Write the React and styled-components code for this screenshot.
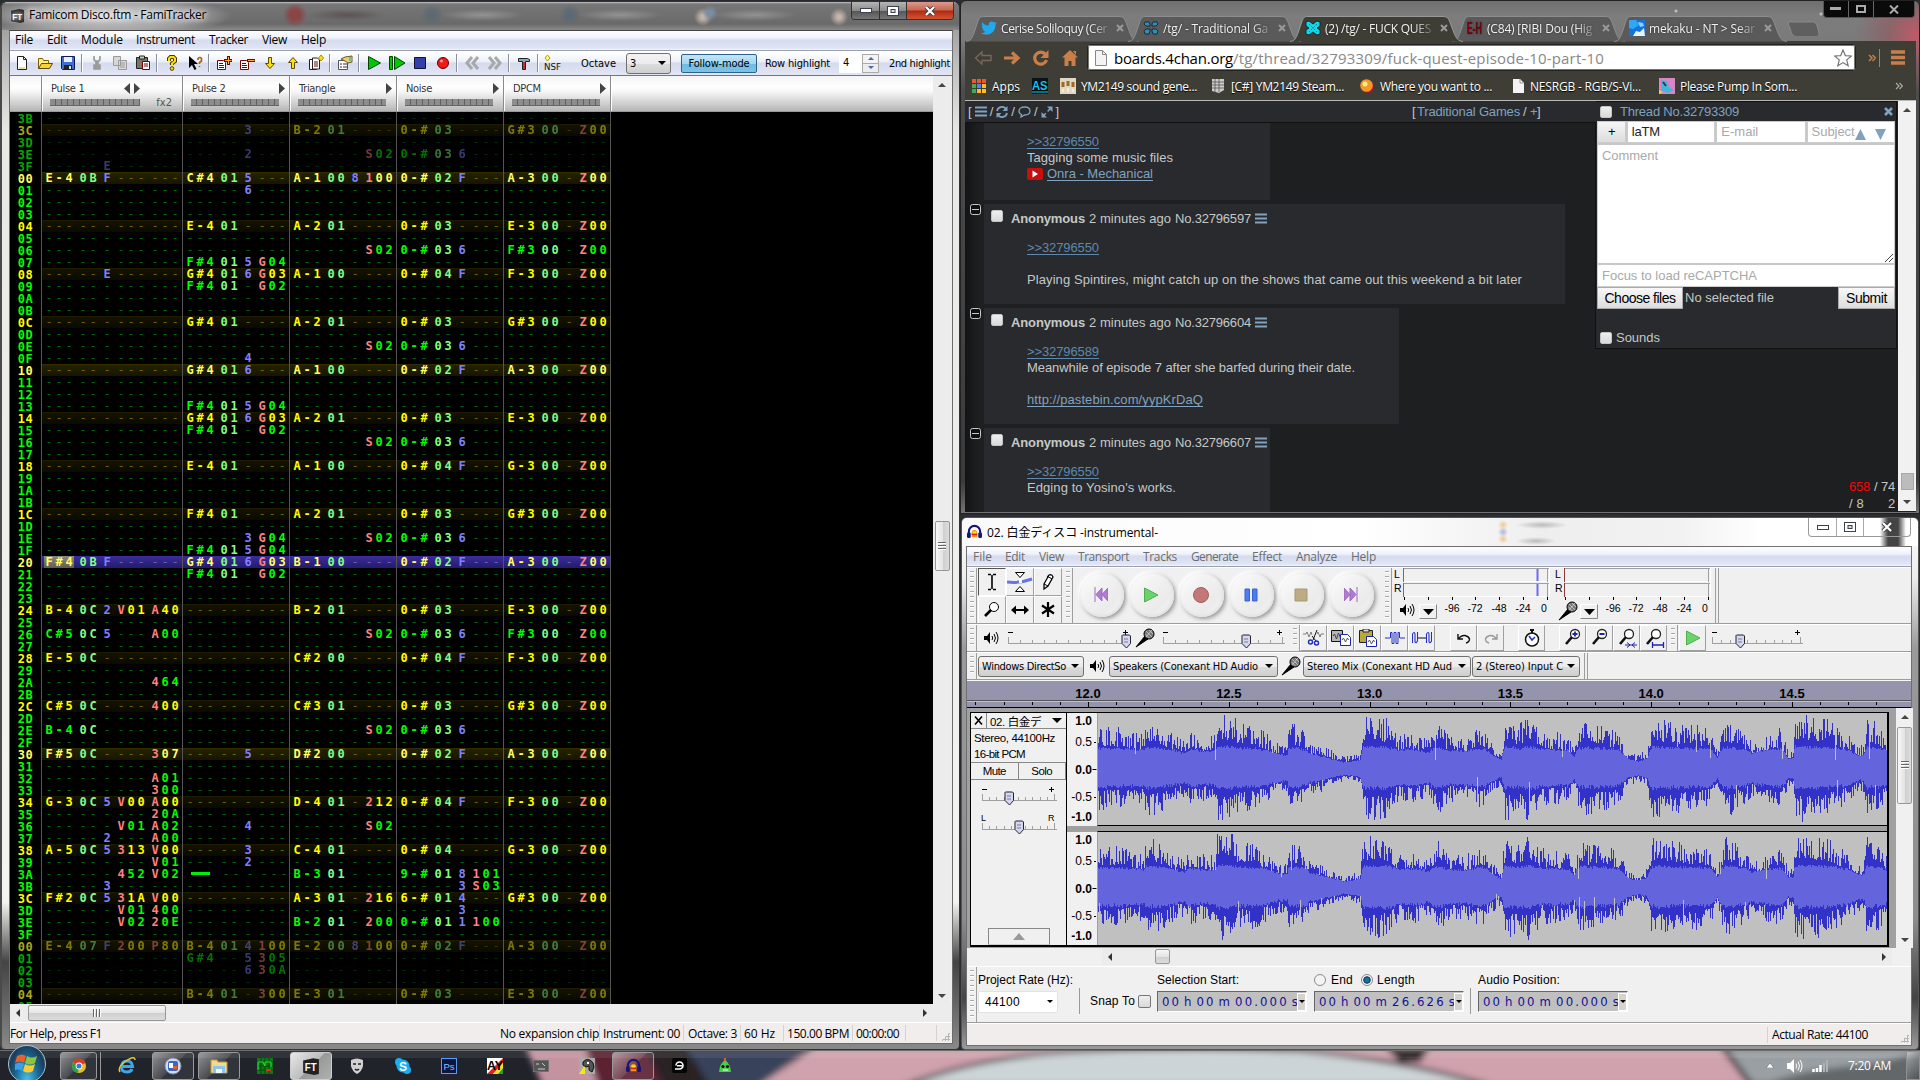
import React, { useLayoutEffect, useRef, useState } from "react";
import styled, { createGlobalStyle, css } from "styled-components";

const ui = `"Open Sans", "Noto Sans", "Noto Sans CJK JP", sans-serif`;
const arial = `"Liberation Sans", "Noto Sans CJK JP", sans-serif`;
const tahoma = `"DejaVu Sans Condensed", "DejaVu Sans", sans-serif`;

const Global = createGlobalStyle`
  *, *::before, *::after { box-sizing: border-box; }
  html, body { margin: 0; padding: 0; background: #26282e; }
  body { width: 1920px; height: 1080px; overflow: hidden; font-family: ${ui}; font-size: 12px; color: #000; }
  svg { display: block; flex: none; }
`;

/* ---------- shared pieces ---------- */

const TrackedText = styled.span`
  display: block;
  flex: none;
  white-space: pre;
  overflow: visible;
  width: ${p => p.$w}px;
  margin-left: ${p => p.$ml || 0}px;
  ${p => p.$size && css`font-size: ${p.$size}px;`}
  ${p => p.$color && css`color: ${p.$color};`}
  ${p => p.$weight && css`font-weight: ${p.$weight};`}
  ${p => p.$font && css`font-family: ${p.$font};`}
  ${p => p.$line && css`border-bottom: 1px solid; line-height: 13px; height: 14px;`}
`;

/* Label whose letter spacing is worked out so that it fills the width w. */
function Label({ w, ml, size, color, weight, font, line, children }) {
  const ref = useRef(null);
  const [spacing, setSpacing] = useState(0);
  useLayoutEffect(() => {
    const natural = ref.current.getBoundingClientRect().width;
    setSpacing((w - natural) / String(children).length);
  }, [w, children]);
  return (
    <TrackedText $w={w} $ml={ml} $size={size} $color={color} $weight={weight} $font={font} $line={line}>
      <span ref={ref} style={{ letterSpacing: spacing }}>{children}</span>
    </TrackedText>
  );
}

const Desktop = styled.main`
  position: relative;
  width: 1920px;
  height: 1080px;
  overflow: hidden;
  background: #2a2c31;
`;

const Window = styled.section`
  position: absolute;
  left: ${p => p.$x}px;
  top: ${p => p.$y}px;
  width: ${p => p.$w}px;
  height: ${p => p.$h}px;
  display: flex;
  flex-direction: column;
  overflow: hidden;
`;

const ScrollTrack = styled.div`
  display: flex;
  flex: none;
  flex-direction: ${p => (p.$horizontal ? "row" : "column")};
  align-items: center;
  background: ${p => p.$bg || "#ececec"};
  ${p => (p.$horizontal ? css`height: ${p.$size}px;` : css`width: ${p.$size}px;`)}
`;
const ScrollArrow = styled.i`
  flex: none;
  width: 0;
  height: 0;
  border: 4px solid transparent;
  ${p => p.$dir === "up" && css`border-bottom-color: #444; border-top: 0; margin: ${p.$m};`}
  ${p => p.$dir === "down" && css`border-top-color: #444; border-bottom: 0; margin: ${p.$m};`}
  ${p => p.$dir === "left" && css`border-right-color: #333; border-left: 0; margin: ${p.$m};`}
  ${p => p.$dir === "right" && css`border-left-color: #333; border-right: 0; margin: ${p.$m};`}
`;
const ScrollThumb = styled.div`
  display: flex;
  flex: none;
  align-items: center;
  justify-content: center;
  width: ${p => p.$w}px;
  height: ${p => p.$h}px;
  margin: ${p => p.$m || 0};
  border: 1px solid #979797;
  border-radius: 2px;
  background: linear-gradient(${p => (p.$vertical ? "90deg" : "180deg")}, #f7f7f7, #e4e4e4 50%, #cfcfd1 52%, #dcdcdc);
`;
const Ridges = styled.i`
  width: ${p => (p.$vertical ? 8 : 9)}px;
  height: ${p => (p.$vertical ? 9 : 8)}px;
  background: repeating-linear-gradient(${p => (p.$vertical ? "180deg" : "90deg")}, #666 0 1px, #fff 1px 2px, transparent 2px 3px);
`;
const Spacer = styled.div`flex: 1;`;

/* ---------- FamiTracker ---------- */

const FtWindow = styled(Window)`
  background: linear-gradient(180deg, #8a8a8a 0, #bdbdbd 60px, #e8e8e4 130px, #f4f4f0 900px, #444 960px, #8c8c8c 1050px);
  border: 1px solid #333;
  border-left: 2px solid #4a4a4a;
  border-radius: 7px 7px 5px 5px;
`;
const FtTitle = styled.header`
  display: flex;
  flex: none;
  height: 28px;
  background:
    radial-gradient(ellipse 125px 20px at 105px 14px, rgba(220,220,220,.95), rgba(190,190,190,.6) 70%, transparent),
    radial-gradient(circle at 293px 13px, #8a4545 5px, transparent 12px),
    radial-gradient(ellipse 40px 6px at 345px 13px, rgba(85,70,70,.7), transparent),
    radial-gradient(circle at 430px 13px, #5a6973 3px, transparent 11px),
    radial-gradient(ellipse 42px 6px at 480px 13px, rgba(155,155,155,.8), transparent),
    radial-gradient(circle at 568px 13px, #5a6973 3px, transparent 11px),
    radial-gradient(ellipse 42px 6px at 618px 13px, rgba(155,155,155,.8), transparent),
    radial-gradient(circle at 708px 11px, #7a8fa6 2px, transparent 8px),
    radial-gradient(circle at 701px 15px, #c4b5aa 2px, transparent 9px),
    radial-gradient(ellipse 42px 6px at 752px 13px, rgba(155,155,155,.8), transparent),
    radial-gradient(circle at 837px 15px, #c4b5aa 2px, transparent 9px),
    linear-gradient(180deg, #c5c5c5 0, #777 2px, #6a6a6a 22px, #8a8a8a 28px);
`;
const TitleText = styled.div`
  padding: ${p => p.$pad};
  text-shadow: 0 0 5px #fff, 0 0 8px #fff;
  line-height: 17px;
`;
const Caption = styled.div`
  display: flex;
  flex: none;
  width: ${p => p.$w}px;
  height: ${p => p.$h}px;
  margin: ${p => p.$m || "0"};
  border: 1px solid ${p => p.$edge || "#333"};
  border-top: 0;
  border-radius: 0 0 4px 4px;
  overflow: hidden;
`;
const CaptionButton = styled.div`
  display: flex;
  align-items: center;
  justify-content: center;
  width: ${p => p.$w}px;
  border-left: ${p => (p.$first ? 0 : 1)}px solid ${p => p.$edge || "#333"};
  background: ${p => p.$bg};
`;
const FtClient = styled.div`
  display: flex;
  flex-direction: column;
  width: 944px;
  height: 1014px;
  margin-left: 7px;
  border: 1px solid #6c6c6c;
  border-top-color: #444;
  background: #f0f0f0;
`;
const MenuBar = styled.nav`
  display: flex;
  flex: none;
  align-items: center;
  height: ${p => p.$h}px;
  padding-bottom: ${p => p.$lift || 0}px;
  background: linear-gradient(180deg, #fdfdff 0, #f0f3fa 35%, #d6dcef 50%, #dfe5f5 90%, #f4f6fb);
  border-bottom: 1px solid #9aa0ad;
`;
const FtToolbar = styled.div`
  display: flex;
  flex: none;
  align-items: center;
  height: 25px;
  padding-bottom: 1px;
  border-top: 1px solid #fff;
  border-bottom: 1px solid #777;
  background: linear-gradient(180deg, #fff, #eef1f9 40%, #d5dbee 50%, #e2e6f4);
`;
const ToolIcon = styled.div`
  display: flex;
  flex: none;
  justify-content: center;
  width: 23px;
`;
const ToolSep = styled.div`
  flex: none;
  width: 6px;
  height: 18px;
  background: linear-gradient(90deg, transparent 2px, #8b8f99 2px 3px, #fff 3px 4px, transparent 4px);
`;
const Select = styled.div`
  display: flex;
  flex: none;
  align-items: center;
  width: ${p => p.$w}px;
  height: ${p => p.$h || 21}px;
  margin-left: ${p => p.$ml || 0}px;
  padding-left: 3px;
  border: 1px solid #707070;
  border-radius: 3px;
  background: linear-gradient(180deg, #f3f3f3, #ebebeb 50%, #dcdcdc 52%, #cfcfcf);
`;
const SelectText = styled.div`
  flex: 1;
  min-width: 0;
  overflow: hidden;
  white-space: nowrap;
  font-family: ${tahoma};
  font-size: 11px;
`;
const Caret = styled.i`
  flex: none;
  width: 0;
  height: 0;
  margin: 0 ${p => p.$mr ?? 4}px;
  border: ${p => p.$s || 4}px solid transparent;
  border-top-color: #000;
  border-bottom: 0;
`;
const FollowButton = styled.div`
  display: flex;
  flex: none;
  align-items: center;
  justify-content: center;
  width: 76px;
  height: 19px;
  margin-left: 10px;
  border: 1px solid #2c628b;
  border-radius: 2px;
  background: linear-gradient(180deg, #c5e5f6, #a0d6f0 50%, #6fbbe0 52%, #7cc4e6);
`;
const NumberField = styled.div`
  display: flex;
  flex: none;
  width: 40px;
  height: 19px;
  margin-left: 9px;
  background: #fff;
  span { flex: 1; padding-left: 4px; font: 11px/18px ${tahoma}; }
`;
const Spinner = styled.div`
  display: flex;
  flex-direction: column;
  align-items: center;
  justify-content: space-around;
  width: 17px;
  border: 1px solid #aaa;
  background: linear-gradient(180deg, #f3f3f3 45%, #aaa 45% 52%, #ededed 52%);
  i { border: 3px solid transparent; border-bottom: 3px solid #4c68a8; border-top: 0; }
  i + i { border-top: 3px solid #4c68a8; border-bottom: 0; }
`;
const TrackerBody = styled.div`
  display: flex;
  height: 928px;
`;
const TrackerMain = styled.div`
  display: flex;
  flex-direction: column;
  width: 923px;
  background: #000;
  overflow: hidden;
`;
const ChannelHeads = styled.div`
  display: flex;
  flex: none;
  height: 36px;
  background: linear-gradient(180deg, #f4f4f4 0, #fff 30%, #f6f6f6 45%, #b6b6b6);
  border-bottom: 1px solid #999;
`;
const ChannelHead = styled.div`
  flex: none;
  width: ${p => p.$w}px;
  padding: 4px 4px 0 8px;
  border-left: 1px solid #8a8a8a;
  box-shadow: inset 1px 0 #fff;
`;
const HeadGutter = styled.div`width: 31px;`;
const HeadLine = styled.div`
  display: flex;
  align-items: center;
  height: 16px;
  color: #333;
  font: 11px ${tahoma};
  letter-spacing: -0.3px;
  span { flex: 1; padding-left: 1px; }
  svg { margin-left: 4px; }
`;
const MeterLine = styled.div`
  display: flex;
  align-items: center;
  justify-content: space-between;
  height: 12px;
  padding-right: 6px;
  color: #555;
  font: 11px ${tahoma};
`;
const Meter = styled.i`
  width: 90px;
  height: 7px;
  background: repeating-linear-gradient(90deg, #8d8d8d 0 5px, #5f5f5f 5px 6px);
  border-bottom: 1px solid #666;
`;
const PatternRow = styled.div`
  display: flex;
  flex: none;
  height: 12px;
  font: bold 12px/12px "DejaVu Sans Mono", monospace;
`;
const RowNumber = styled.div`
  width: 31px;
  height: 12px;
  padding-top: 1px;
  text-align: center;
  letter-spacing: 0.5px;
  color: ${p => p.$color};
`;
const rowBackground = {
  plain: "transparent",
  beat: "linear-gradient(180deg, #1c1a00 0 1px, #141200 1px, #0b0a00)",
  bar: "linear-gradient(180deg, #302e00 0 1px, #242200 1px, #171500)",
  cursor: "linear-gradient(180deg, #3b2d9c 0, #2f2484 50%, #241b6c)",
};
const Cell = styled.div`
  display: flex;
  flex: none;
  gap: 4px;
  width: ${p => p.$w}px;
  padding-left: 2px;
  border-left: 1px solid #555;
  background: ${p => rowBackground[p.$kind]};
`;
const Field = styled.div`
  display: flex;
  opacity: ${p => (p.$dim ? 0.45 : 1)};
  background: ${p => (p.$selected ? "linear-gradient(180deg, #8d8a7c, #5f5c55)" : "none")};
`;
const Glyph = styled.span`
  width: 10px;
  height: 12px;
  text-align: center;
  color: ${p => p.$c};
  font-weight: ${p => (p.$empty ? 400 : 700)};
`;
const HaltMark = styled.i`
  width: 19px;
  height: 3px;
  margin: 4px 7px 0 6px;
  background: #00f000;
`;
const PatternEdge = styled.div`
  width: 1px;
  background: #555;
`;
const StatusBar = styled.footer`
  display: flex;
  flex: none;
  align-items: center;
  height: ${p => p.$h}px;
  border-top: 1px solid #fff;
  background: #f1edec;
`;
const StatusPane = styled.div`
  display: flex;
  flex: none;
  align-items: center;
  width: ${p => p.$w}px;
  height: 16px;
  padding-left: 3px;
  border-left: 1px solid #d5d2d1;
`;
const GripDots = styled.i`
  width: 9px;
  height: 9px;
  margin: 7px 2px 0 auto;
  background: radial-gradient(circle, #b5b1b0 1px, transparent 1.2px) 0 0 / 3px 3px;
  clip-path: polygon(100% 0, 100% 100%, 0 100%);
`;

const PREV = {
  "3C": [, ".....3", "B-201", "0-#03", "G#300.Z00"],
  "3E": [, ".....2", "......S02", "0-#036"],
  "3F": [".....E"],
};
const CURRENT = {
  "00": ["E-40BF", "C#4015", "A-1008100", "0-#02F", "A-300.Z00"],
  "01": [, ".....6"],
  "04": [, "E-401", "A-201", "0-#03", "E-300.Z00"],
  "06": [, , "......S02", "0-#036", "F#300.Z00"],
  "07": [, "F#4015G04"],
  "08": [".....E", "G#4016G03", "A-100", "0-#04F", "F-300.Z00"],
  "09": [, "F#401.G02"],
  "0C": [, "G#401", "A-201", "0-#03", "G#300.Z00"],
  "0E": [, , "......S02", "0-#036"],
  "0F": [, ".....4"],
  "10": [, "G#4016", "A-100", "0-#02F", "A-300.Z00"],
  "13": [, "F#4015G04"],
  "14": [, "G#4016G03", "A-201", "0-#03", "E-300.Z00"],
  "15": [, "F#401.G02"],
  "16": [, , "......S02", "0-#036"],
  "18": [, "E-401", "A-100", "0-#04F", "G-300.Z00"],
  "1C": [, "F#401", "A-201", "0-#03", "G#300.Z00"],
  "1E": [, ".....3G04", "......S02", "0-#036"],
  "1F": [, "F#4015G04"],
  "20": ["F#40BF", "G#4016G03", "B-100", "0-#02F", "A-300.Z00"],
  "21": [, "F#401.G02"],
  "24": ["B-40C2V01A40", , "B-201", "0-#03", "E-300.Z00"],
  "26": ["C#50C5...A00", , "......S02", "0-#036", "F#300.Z00"],
  "28": ["E-50C", , "C#200", "0-#04F", "F-300.Z00"],
  "2A": [".........464"],
  "2C": ["C#50C....400", , "C#301", "0-#03", "G#300.Z00"],
  "2E": ["B-40C", , "......S02", "0-#036"],
  "30": ["F#50C....307", ".....5", "D#200", "0-#02F", "A-300.Z00"],
  "32": [".........A01"],
  "33": [".........300"],
  "34": ["G-30C5V00A00", , "D-401.212", "0-#04F", "F-300.Z00"],
  "35": [".........20A"],
  "36": ["......V01A02", ".....4", "......S02"],
  "37": [".....2...A00"],
  "38": ["A-50C5313V00", ".....3", "C-401", "0-#04", "G-300.Z00"],
  "39": [".........V01", ".....2"],
  "3A": ["......452V02", "===", "B-301", "9-#018101"],
  "3B": [".....3", , , ".....3S03"],
  "3C": ["F#20C531AV00", , "A-301.216", "6-#014", "G#300.Z00"],
  "3D": ["......V01400", , , ".....3"],
  "3E": ["......V0220E", , "B-201.200", "0-#011100"],
};
const NEXT = {
  "00": ["E-407F200P80", "B-4014100", "E-2008100", "0-#02F", "A-300.Z00"],
  "01": [, "G#4..5305"],
  "02": [, ".....630A"],
  "04": [, "B-401.300", "E-301", "0-#03", "E-300.Z00"],
};
const hex = n => n.toString(16).toUpperCase().padStart(2, "0");
const frame = (data, from, to, dim) => {
  const out = [];
  for (let i = from; i <= to; i++) out.push({ i, id: hex(i), cells: data[hex(i)] || [], dim });
  return out;
};
const ROWS = [...frame(PREV, 0x3b, 0x3f, true), ...frame(CURRENT, 0, 0x3f, false), ...frame(NEXT, 0, 5, true)];
const CHANNELS = [
  { name: "Pulse 1", w: 141, len: 12 },
  { name: "Pulse 2", w: 107, len: 9 },
  { name: "Triangle", w: 107, len: 9 },
  { name: "Noise", w: 107, len: 9 },
  { name: "DPCM", w: 107, len: 9 },
];
const FIELDS = [[0, 3], [3, 5], [5, 6], [6, 9], [9, 12]];

function PatternCell({ text = "", channel, kind, dim, selected }) {
  const full = text.padEnd(channel.len, ".");
  const base = kind === "plain" ? "#00ff00" : kind === "beat" ? "#ffff00" : "#ffff60";
  const empty = kind === "plain" ? "#006414" : kind === "cursor" ? "#6a62ac" : "#68650c";
  return (
    <Cell $w={channel.w} $kind={kind}>
      {FIELDS.filter(f => f[1] <= channel.len).map(([a, b], fi) => {
        if (fi === 0 && full.startsWith("===")) return <HaltMark key={fi} />;
        const part = full.slice(a, b);
        return (
          <Field key={fi} $dim={dim} $selected={selected && fi === 0}>
            {[...part].map((ch, k) => {
              const isEmpty = ch === ".";
              let c = base;
              if (fi === 1) c = "#80ff80";
              if (fi === 2) c = "#8080ff";
              if (fi >= 3 && k === 0) c = "#ff8080";
              return <Glyph key={k} $c={isEmpty ? empty : c} $empty={isEmpty}>{isEmpty ? "-" : ch}</Glyph>;
            })}
          </Field>
        );
      })}
    </Cell>
  );
}

const I = ({ children, w = 16, h = 16, vb }) => (
  <svg width={w} height={h} viewBox={vb || `0 0 ${w} ${h}`} fill="none">{children}</svg>
);
const Sheet = ({ x = 0, c = "#800000" }) => (
  <g transform={`translate(${x} 0)`}>
    <path d="M1.500 5.500h6l2 2v7h-8z" fill="#fff" stroke={c} />
    <path d="M3 8.500h4M3 10.500h5M3 12.500h5" stroke={c} />
  </g>
);
const ftTools = [
  <I><path d="M3.500 1.500h6l3 3v10h-9z" fill="#fff" stroke="#222" /><path d="M9.500 1.500v3h3" stroke="#222" /><path d="M5 13h6" stroke="#e8dfa0" strokeWidth="2" /></I>,
  <I><path d="M1.500 13.500v-10h4l1 2h5v3" fill="#ffef80" stroke="#806000" /><path d="M1.500 13.500l3-5h11l-3 5z" fill="#f5d43a" stroke="#604800" /></I>,
  <I><path d="M1.500 1.500h13v13h-12l-1-1z" fill="#3b6fd0" stroke="#101c50" /><path d="M4 2h8v5H4z" fill="#e8f0ff" /><path d="M4 10h8v4H4z" fill="#222" /><path d="M9 11h2v3H9z" fill="#ddd" /></I>,
  null,
  <I><path d="M5 1v4l2 2M11 1v4L9 7M7 6h2v3H7zM5 10h6v4H5z" fill="#9a9a9a" stroke="#9a9a9a" strokeWidth="1.600" /></I>,
  <I><path d="M1.500 1.500h7v9h-7zM6.500 5.500h8v9h-8z" fill="#d8d8d8" stroke="#9a9a9a" /><path d="M8 8h5M8 10h5M8 12h5" stroke="#9a9a9a" /></I>,
  <I><path d="M1.500 2.500h11v11h-11z" fill="#77756a" stroke="#222" /><path d="M4.500 1h5v3h-5z" fill="#ccc" stroke="#222" /><path d="M7.500 6.500h7v8h-7z" fill="#fff" stroke="#700" /><path d="M9 9h4M9 11h4" stroke="#700" /></I>,
  null,
  <I><path d="M5 6V3.500L6.500 2h3L11 3.500V6L8 8.500V10" stroke="#4a3a00" strokeWidth="4" /><path d="M5 6V3.500L6.500 2h3L11 3.500V6L8 8.500V10" stroke="#ffe000" strokeWidth="2" /><circle cx="8" cy="13.500" r="1.800" fill="#ffe000" stroke="#4a3a00" /></I>,
  <I><path d="M2 1v12l3-3 2.500 5 2-1L7 9h4z" fill="#000" /><path d="M11 5V3.500q2-2 3.500 0V6l-2 1.500V9M12.500 11v1" stroke="#b06000" strokeWidth="1.600" /></I>,
  null,
  <I><Sheet /><path d="M12.500 1v9M8 5.500h8" stroke="#700" strokeWidth="3" /><path d="M12.500 2v7M9 5.500h6.500" stroke="#ffb040" /></I>,
  <I><Sheet /><path d="M8 5.500h8" stroke="#700" strokeWidth="3" /><path d="M9 5.500h6.500" stroke="#ffb040" /></I>,
  <I><path d="M6.500 2.500h3v6h3L8 13.500 3.500 8.500h3z" fill="#ffe000" stroke="#5a4a00" /></I>,
  <I><path d="M6.500 13.500h3v-6h3L8 2.500 3.500 7.500h3z" fill="#ffe000" stroke="#5a4a00" /></I>,
  <I><path d="M1.500 4.500h7v10h-7z" fill="#fff" stroke="#222" /><path d="M4.500 3h5l2 2v9h-7z" fill="#fff" stroke="#222" /><path d="M6 7h4M6 9h4M6 11h4" stroke="#700" /><path d="M13 0l2.500 3L13 6l-2.500-3z" fill="#ffe000" stroke="#b09000" /></I>,
  null,
  <I><path d="M1.500 5.500h9v9h-9z" fill="#fff" stroke="#555" /><path d="M3 9h2M6 9h4M3 12h2M6 12h4" stroke="#333" /><path d="M4 4l4-2 7-1v6l-4 1-3-2z" fill="#e8cf70" stroke="#6a5a20" /><path d="M12 2h3v4h-3z" fill="#77b8a0" /></I>,
  null,
  <I><path d="M2.500 1.500L14.500 8 2.500 14.500z" fill="#00c800" stroke="#064006" /></I>,
  <I w={18}><path d="M1.500 1.500h3v13h-3z" fill="#00c800" stroke="#064006" /><path d="M6.500 1.500L17 8 6.500 14.500z" fill="#00c800" stroke="#064006" /></I>,
  <I><path d="M2.500 2.500h11v11h-11z" fill="#3340a8" stroke="#101430" /></I>,
  <I><circle cx="8" cy="8" r="5.500" fill="#f01818" stroke="#600" /><circle cx="6.500" cy="6" r="1.500" fill="#ff9a9a" /></I>,
  null,
  <I><path d="M8 2L3 8l5 6M14 2L9 8l5 6" stroke="#a8a8a8" strokeWidth="3" /></I>,
  <I><path d="M2 2l5 6-5 6M8 2l5 6-5 6" stroke="#a8a8a8" strokeWidth="3" /></I>,
  null,
  <I><path d="M2.500 3.500h9l2 1v2h-4v8h-3v-8h-4z" fill="#8ab" stroke="#222" /><path d="M7 7h2v7H7z" fill="#c03030" /></I>,
  null,
  <I w={20}><text x="1" y="15" fontSize="9.500" fontFamily="DejaVu Sans" textLength="17" lengthAdjust="spacingAndGlyphs" fill="#111">NSF</text><path d="M4.500 0l2.500 3-2.500 3L2 3z" fill="#ffff70" stroke="#b0a000" /></I>,
];

const Glyphs = {
  min: <I w={12} h={5}><rect x=".5" y=".5" width="11" height="4" fill="#fff" stroke="#3b4150" /></I>,
  max: <I w={12} h={10}><rect x=".5" y=".5" width="11" height="9" fill="#fff" stroke="#3b4150" /><rect x="4" y="3.500" width="4" height="3" fill="#ddd" stroke="#3b4150" /></I>,
  close: <I w={12} h={10}><path d="M2 1l8 8M10 1L2 9" stroke="#3b3b48" strokeWidth="4" /><path d="M2 1l8 8M10 1L2 9" stroke="#fff" strokeWidth="2.200" /></I>,
};

function FtIcon({ s = 16 }) {
  return (
    <svg width={s} height={s} viewBox="0 0 16 16">
      <path d="M1 3l9-2 5 1v13l-4 1-10-2z" fill="#222" />
      <text x="2.500" y="12.500" fontSize="10" fontWeight="700" fontFamily="Liberation Sans" textLength="10.500" lengthAdjust="spacingAndGlyphs" fill="#fff">FT</text>
    </svg>
  );
}

function FamiTracker() {
  return (
    <FtWindow $x={0} $y={1} $w={960} $h={1049}>
      <FtTitle>
        <TitleText $pad="6px 0 0 8px"><FtIcon s={15} /></TitleText>
        <TitleText $pad="4px 0 0 4px"><Label w={177}>Famicom Disco.ftm - FamiTracker</Label></TitleText>
        <Spacer />
        <Caption $w={103} $h={18} $m="0 5px 0 0">
          <CaptionButton $first $w={28} $bg="linear-gradient(#b5b5b5, #8c8c8c 50%, #555 52%, #777)">{Glyphs.min}</CaptionButton>
          <CaptionButton $w={27} $bg="linear-gradient(#b5b5b5, #8c8c8c 50%, #555 52%, #777)">{Glyphs.max}</CaptionButton>
          <CaptionButton $w={48} $bg="linear-gradient(#d99a8c, #c9654f 48%, #b02a12 52%, #d2542f)">{Glyphs.close}</CaptionButton>
        </Caption>
      </FtTitle>
      <FtClient>
        <MenuBar $h={20} $lift={2}>
          <Label ml={5} w={18}>File</Label>
          <Label ml={14} w={20}>Edit</Label>
          <Label ml={14} w={42}>Module</Label>
          <Label ml={13} w={59}>Instrument</Label>
          <Label ml={14} w={39}>Tracker</Label>
          <Label ml={14} w={25}>View</Label>
          <Label ml={14} w={25}>Help</Label>
        </MenuBar>
        <FtToolbar>
          {ftTools.map((t, i) => (t ? <ToolIcon key={i}>{t}</ToolIcon> : <ToolSep key={i} />))}
          <Label ml={17} w={35} size={11} font={tahoma}>Octave</Label>
          <Select $w={45} $ml={10}><SelectText>3</SelectText><Caret /></Select>
          <FollowButton><Label w={61} size={11} font={tahoma}>Follow-mode</Label></FollowButton>
          <Label ml={8} w={65} size={11} font={tahoma}>Row highlight</Label>
          <NumberField><span>4</span><Spinner><i /><i /></Spinner></NumberField>
          <Label ml={10} w={61} size={11} font={tahoma}>2nd highlight</Label>
        </FtToolbar>
        <TrackerBody>
          <TrackerMain>
            <ChannelHeads>
              <HeadGutter />
              {CHANNELS.map((c, i) => (
                <ChannelHead key={c.name} $w={c.w}>
                  <HeadLine>
                    <span>{c.name}</span>
                    {i === 0 && <I w={6} h={11}><path d="M6 0L0 5.500 6 11z" fill="#444" /></I>}
                    <I w={6} h={11}><path d="M0 0l6 5.500L0 11z" fill="#444" /></I>
                    {i === 0 && <I w={34} h={11} />}
                  </HeadLine>
                  <MeterLine><Meter />{i === 0 && "fx2"}</MeterLine>
                </ChannelHead>
              ))}
              <ChannelHead $w={322} />
            </ChannelHeads>
            {ROWS.map((r, n) => {
              const cursor = !r.dim && r.i === 0x20;
              const kind = cursor ? "cursor" : r.i % 16 === 0 ? "bar" : r.i % 4 === 0 ? "beat" : "plain";
              const num = r.dim ? (kind === "plain" ? "#00a800" : "#a8a820") : kind === "plain" ? "#00ff00" : kind === "beat" ? "#ffff00" : "#ffff60";
              const cellKind = r.dim && kind === "bar" ? "beat" : kind;
              return (
                <PatternRow key={n}>
                  <RowNumber $color={num}>{r.id}</RowNumber>
                  {CHANNELS.map((c, k) => (
                    <PatternCell key={k} text={r.cells[k]} channel={c} kind={cellKind} dim={r.dim} selected={cursor && k === 0} />
                  ))}
                  <PatternEdge />
                </PatternRow>
              );
            })}
          </TrackerMain>
          <ScrollTrack $size={18}>
            <ScrollArrow $dir="up" $m="7px 0 0" />
            <ScrollThumb $vertical $w={15} $h={50} $m="434px 0 0"><Ridges $vertical /></ScrollThumb>
            <Spacer />
            <ScrollArrow $dir="down" $m="0 0 6px" />
          </ScrollTrack>
        </TrackerBody>
        <ScrollTrack $horizontal $size={18}>
          <ScrollArrow $dir="left" $m="0 0 0 6px" />
          <ScrollThumb $w={138} $h={16} $m="0 0 0 8px"><Ridges /></ScrollThumb>
          <Spacer />
          <ScrollArrow $dir="right" $m="0 25px 0 0" />
        </ScrollTrack>
        <StatusBar $h={21}>
          <Label w={92}>For Help, press F1</Label>
          <Spacer />
          <Label w={99}>No expansion chip</Label>
          <Spacer as="i" hidden />
          <StatusPane $w={84}><Label w={77}>Instrument: 00</Label></StatusPane>
          <StatusPane $w={57}><Label ml={1} w={49}>Octave: 3</Label></StatusPane>
          <StatusPane $w={43}><Label w={31}>60 Hz</Label></StatusPane>
          <StatusPane $w={69}><Label w={62}>150.00 BPM</Label></StatusPane>
          <StatusPane $w={53}><Label w={43}>00:00:00</Label></StatusPane>
          <StatusPane $w={31} />
          <StatusPane $w={16}><GripDots /></StatusPane>
        </StatusBar>
      </FtClient>
    </FtWindow>
  );
}

/* ---------- Chrome ---------- */

const ChromeWindow = styled(Window)`
  background:
    radial-gradient(circle at 955px 34px, #c05a68 0, rgba(150,80,88,.5) 28px, transparent 60px),
    radial-gradient(circle at 715px 10px, #bbb 1px, transparent 2px),
    radial-gradient(circle at 860px 13px, #bbb 1px, transparent 2px),
    linear-gradient(180deg, #6f6f6f 0, #7d7d7d 14px, #7a7a7a 40px, #4c4c4c 90px, #3a3a3a 480px, #777 514px);
  border: 1px solid #222;
  border-radius: 6px 6px 0 0;
`;
const TabStrip = styled.div`
  position: relative;
  display: flex;
  flex: none;
  height: 40px;
  padding: 15px 0 0 5px;
`;
const Tab = styled.div`
  position: relative;
  z-index: ${p => (p.$active ? 2 : 1)};
  display: flex;
  align-items: center;
  flex: none;
  width: 173px;
  height: 25px;
  margin-right: -11px;
  padding: 0 0 1px 15px;
  color: #f2f2f2;
  text-shadow: 0 0 2px #222;
`;
const TabShape = styled.svg`
  position: absolute;
  inset: 0;
  z-index: -1;
`;
const TabText = styled.div`
  width: 108px;
  margin: 0 7px 0 4px;
  -webkit-mask-image: linear-gradient(90deg, #000 82%, rgba(0,0,0,.15));
  mask-image: linear-gradient(90deg, #000 82%, rgba(0,0,0,.15));
`;
const ChromeCaption = styled.div`
  position: absolute;
  right: 4px;
  top: 0;
  display: flex;
  width: 92px;
  height: 17px;
  border: 1px solid #555;
  border-top: 0;
  border-radius: 0 0 4px 4px;
  background: #0a0a0a;
  div { display: flex; align-items: center; justify-content: center; border-left: 1px solid #666; flex: 1; }
  div:first-child { border-left: 0; }
  div:last-child { flex: 1.700; }
`;
const ChromeBody = styled.div`
  display: flex;
  flex-direction: column;
  width: 951px;
  height: 471px;
  margin-left: 4px;
  background: #1d1f21;
`;
const NavBar = styled.div`
  display: flex;
  flex: none;
  align-items: center;
  height: 35px;
  padding-bottom: 2px;
  background: #3e3e36;
`;
const NavIcon = styled.div`
  display: flex;
  justify-content: center;
  flex: none;
  width: ${p => p.$w || 29}px;
  margin-left: ${p => p.$ml || 0}px;
`;
const UrlBox = styled.div`
  display: flex;
  align-items: center;
  flex: none;
  width: 769px;
  height: 27px;
  margin-left: 3px;
  padding-left: 7px;
  border: 1px solid #222;
  outline: 1px solid #77776f;
  outline-offset: -2px;
  border-radius: 3px;
  background: #fff;
`;
const Bookmarks = styled.div`
  display: flex;
  flex: none;
  align-items: center;
  height: 25px;
  padding-bottom: 4px;
  border-bottom: 1px solid #b8b8b4;
  background: #3e3e36;
  color: #fff;
  font-weight: 500;
  text-shadow: 0 1px 1px #000;
`;
const PageArea = styled.div`
  display: flex;
  height: 411px;
`;
const Thread = styled.div`
  display: flex;
  flex-direction: column;
  flex: none;
  width: 631px;
  background: linear-gradient(90deg, #131416, #1d1f21 14px);
  font: 13px/16px ${arial};
  color: #c5c8c6;
  overflow: hidden;
`;
const BoardBar = styled.div`
  position: relative;
  z-index: 1;
  display: flex;
  align-items: center;
  flex: none;
  height: 22px;
  padding-left: 3px;
  border-bottom: 1px solid #111;
  background: #282a2e;
  color: #c5c8c6;
  gap: 3px;
`;
const Posts = styled.div`
  display: flex;
  flex-direction: column;
  gap: 4px;
  margin-top: -25px;
`;
const PostRow = styled.div`
  display: flex;
  gap: 3px;
  padding-left: 5px;
`;
const PostBox = styled.article`
  width: ${p => p.$w}px;
  height: ${p => p.$h}px;
  background: #282a2e;
`;
const PostHead = styled.div`
  display: flex;
  align-items: center;
  height: 29px;
  padding-left: 7px;
`;
const PostText = styled.div`
  display: flex;
  flex-direction: column;
  padding: 7px 0 0 43px;
`;
const PostLine = styled.div`
  display: flex;
  align-items: center;
  height: 16px;
`;
const Check = styled.i`
  flex: none;
  width: ${p => p.$s || 12}px;
  height: ${p => p.$s || 12}px;
  margin: ${p => p.$m || 0};
  border: 1px solid ${p => p.$edge || "#c4c4c4"};
  border-radius: 2px;
  background: linear-gradient(180deg, #efefef, #d9d9d9);
`;
const ReplyPanel = styled.div`
  display: flex;
  flex-direction: column;
  flex: none;
  width: 302px;
  height: 248px;
  margin-left: -1px;
  padding: 0 1px;
  border: 1px solid #111;
  background: #282a2e;
  font: 13px/16px ${arial};
  color: #c5c8c6;
`;
const ReplyHead = styled.div`
  display: flex;
  align-items: center;
  height: 19px;
  padding: 0 2px 0 3px;
`;
const ReplyFields = styled.div`
  display: flex;
  gap: 1px;
  height: 23px;
  background: #c8c8c8;
  padding-top: 1px;
`;
const ReplyInput = styled.div`
  display: flex;
  align-items: center;
  width: ${p => p.$w}px;
  height: ${p => p.$h || 21}px;
  padding-left: 4px;
  background: ${p => p.$bg || "#fff"};
  border: 1px solid #ccc;
  border-top: 0;
`;
const CommentBox = styled.div`
  position: relative;
  height: 121px;
  padding: 3px 4px;
  border: 1px solid #c8c8c8;
  border-width: 1px 1px 2px;
  background: #fff;
  svg { position: absolute; right: 1px; bottom: 1px; }
`;
const FileRow = styled.div`
  display: flex;
  align-items: center;
  height: 22px;
`;
const FormButton = styled.div`
  display: flex;
  align-items: center;
  justify-content: center;
  width: ${p => p.$w}px;
  height: 22px;
  border: 1px solid #aaa;
  background: linear-gradient(180deg, #f8f8f8, #ddd);
  color: #000;
`;
const SoundRow = styled.div`
  display: flex;
  align-items: center;
  margin: 20px 0 0 3px;
  height: 18px;
`;
const ReplyColumn = styled.div`
  display: flex;
  flex-direction: column;
  justify-content: space-between;
  flex: none;
  width: 302px;
`;
const Counter = styled.div`
  display: flex;
  flex-wrap: wrap;
  justify-content: space-between;
  align-self: flex-end;
  width: 49px;
  height: 33px;
  padding-right: 3px;
  font: 13px/16px ${arial};
  color: #c5c8c6;
`;
const PageScroll = styled(ScrollTrack)`
  height: 410px;
`;
const FlatThumb = styled.i`
  width: 13px;
  height: 17px;
  margin-bottom: 10px;
  border: 1px solid #a8a8a8;
  background: #bcbcbc;
`;

const lnk = "#81a2be";
const quote = "#5f89ac";

const Bird = <I w={16} h={16}><path d="M0 13c2 0 3.500-.4 4.500-1.300C2.800 11.500 2 10.400 1.600 9.300h1.300C1.300 8.700.6 7.500.6 5.900l1.300.4C.7 5.200.4 3.700 1.200 2.200 3 4.300 5 5.500 7.700 5.600 7.200 3.300 8.800 1.600 10.800 1.600c1 0 1.800.4 2.400 1l2-.8-.9 1.700 1.600-.4-1.400 1.600C14.600 11 10.500 14.500 5.500 14.500 3.400 14.500 1.500 14 0 13z" fill="#1fa9ee" /></I>;
const Clover = ({ c, full }) => (
  <I>
    <path d={full
      ? "M1 2l3-1 4 3 4-3 3 1v4l-3 2 3 2v4l-3 1-4-3-4 3-3-1v-4l3-2-3-2z"
      : "M2 2h4l1 2v2H3L1 4zM14 2h-4L9 4v2h4l2-2zM2 14h4l1-3V9H3l-2 2zM14 14h-4l-1-3V9h4l2 2z"} fill={c} stroke="#0a1a24" strokeWidth=".8" />
    {full && <path d="M4 4l8 8M12 4l-8 8" stroke="#0a5560" strokeDasharray="1 1.500" />}
  </I>
);
const Eh = <I><text x="0" y="14" fontFamily="Liberation Sans" fontSize="16" fontWeight="700" textLength="15" lengthAdjust="spacingAndGlyphs" fill="#7a0010">E-H</text></I>;
const Avatar = <I><rect width="16" height="16" fill="#1473dd" /><path d="M0 0h7l3 5-6 4-4-1z" fill="#2ea8f6" /><path d="M4 16l3-5 4 1 4-4 1 8z" fill="#e6f4ff" /><path d="M9 2l5 1 1 3-4 1z" fill="#8fd0ff" /></I>;
const tabs = [
  ["Cerise Soliloquy (Cer", 106, Bird],
  ["/tg/ - Traditional Ga", 105, <Clover c="#2b8fb8" />],
  ["(2) /tg/ - FUCK QUES", 106, <Clover c="#12d8e8" full />, true],
  ["(C84) [RIBI Dou (Hig", 105, Eh],
  ["mekaku - NT > Sear", 106, Avatar],
];
const closeX = <I w={8} h={8}><path d="M1 1l6 6M7 1L1 7" stroke="#9a9a9a" strokeWidth="2" /></I>;

const bars = c => <I w={12} h={11}><path d="M0 1.500h12M0 5.500h12M0 9.500h12" stroke={c} strokeWidth="2" /></I>;

function Post({ w, h, no, children }) {
  return (
    <PostRow>
      <I w={11} h={12}><rect x=".5" y=".5" width="10" height="10" rx="2" stroke="#c5c8c6" fill="#111" /><path d="M2 5.500h7" stroke="#c5c8c6" /></I>
      <PostBox $w={w} $h={h}>
        <PostHead>
          <Check $m="-5px 0 0" />
          <Label ml={8} w={74} weight={700}>Anonymous</Label>
          <Label ml={4} w={82}>2 minutes ago</Label>
          <Label ml={4} w={76}>{"No." + no}</Label>
          <NavIcon $w={12} $ml={4}>{bars(lnk)}</NavIcon>
        </PostHead>
        <PostText>{children}</PostText>
      </PostBox>
    </PostRow>
  );
}
const Quote = ({ no }) => <PostLine><Label w={72} color={quote} line>{">>" + no}</Label></PostLine>;

function Chrome() {
  return (
    <ChromeWindow $x={960} $y={0} $w={960} $h={514}>
      <TabStrip>
        {tabs.map(([t, w, icon, active], i) => (
          <Tab key={i} $active={active}>
            <TabShape width="173" height="26" viewBox="0 0 173 26">
              <path d="M0 25.500C5 25 6 22 8 17L12 5C13.500 1.500 14.500 .5 18 .5H153C157 .5 158 2 159.500 5L164 17C166 22 168 25 173 25.500" fill={active ? "#3e3e36" : "#5a5a5a"} stroke={active ? "#999" : "#8d8d8d"} />
            </TabShape>
            {icon}
            <TabText><Label w={w}>{t}</Label></TabText>
            {closeX}
          </Tab>
        ))}
        <I w={44} h={20}><path d="M12.500 6h24c3 0 4 2 5 5l1.500 6c.5 3-1 3.500-3 3.500h-20c-3 0-4-2-5-5l-2-6c-1-2-1-3.500-.5-3.500z" fill="#5f5f5f" stroke="#8a8a8a" /></I>
        <ChromeCaption>
          <div><I w={11} h={4}><rect width="11" height="3" fill="#aaa" /></I></div>
          <div><I w={10} h={8}><rect x="1" y="1" width="8" height="6" stroke="#aaa" strokeWidth="2" /></I></div>
          <div><I w={10} h={9}><path d="M1 .5l8 8M9 .5l-8 8" stroke="#aaa" strokeWidth="2" /></I></div>
        </ChromeCaption>
      </TabStrip>
      <ChromeBody>
        <NavBar>
          <NavIcon $w={29} $ml={3}><I w={18} h={16}><path d="M1.500 8L8 2v3.500h9v5H8V14z" stroke="#77695a" strokeWidth="1.300" /></I></NavIcon>
          <NavIcon><I w={18} h={16}><path d="M1 8h12M9 2.500L15 8l-6 5.500" stroke="#c87f49" strokeWidth="3.200" /></I></NavIcon>
          <NavIcon><I w={18} h={16}><path d="M13.500 4.500A6 6 0 1 0 14.500 10" stroke="#c87f49" strokeWidth="3.200" /><path d="M16.500 0v8h-8z" fill="#c87f49" /></I></NavIcon>
          <NavIcon><I w={18} h={16}><path d="M9 0l8 7.500h-2.500V16h-4v-5h-3v5h-4V7.500H1zM12 1h3v4z" fill="#c87f49" /></I></NavIcon>
          <UrlBox>
            <I w={12} h={16}><path d="M.5 .5h7l4 4v11H.5z" fill="#f3f3f3" stroke="#888" /><path d="M7.500.5v4h4" stroke="#888" /></I>
            <Label ml={7} w={119} size={15}>boards.4chan.org</Label>
            <Label w={371} size={15} color="#888">/tg/thread/32793309/fuck-quest-episode-10-part-10</Label>
            <Spacer />
            <NavIcon $w={25}><I w={18} h={18}><path d="M9 1l2.300 5.600 6 .4-4.600 3.900 1.500 5.900L9 13.600l-5.200 3.200 1.500-5.900L.7 7l6-.4z" stroke="#777" strokeWidth="1.200" /></I></NavIcon>
          </UrlBox>
          <NavIcon $w={8} $ml={12}><I w={8} h={8}><path d="M1 1l3 3-3 3M4.500 1l3 3-3 3" stroke="#c87f49" strokeWidth="1.500" /></I></NavIcon>
          <NavIcon $w={6}><I w={1} h={18}><path d="M.5 0v18" stroke="#888" /></I></NavIcon>
          <NavIcon $w={14} $ml={9}><I w={14} h={15}><path d="M0 2h14M0 7.500h14M0 13h14" stroke="#c87f49" strokeWidth="3.400" /></I></NavIcon>
        </NavBar>
        <Bookmarks>
          <NavIcon $w={14} $ml={7}><I w={14} h={14}>{["#e53", "#e53", "#e53", "#4a5", "#48f", "#fb2", "#4a5", "#fb2", "#fb2"].map((c, i) => <rect key={i} x={(i % 3) * 5} y={Math.floor(i / 3) * 5} width="4" height="4" fill={c} />)}</I></NavIcon>
          <Label ml={6} w={28}>Apps</Label>
          <NavIcon $w={16} $ml={12}><I><rect width="16" height="16" fill="#08141a" /><text x="0" y="12" fontSize="12" fontWeight="700" fontFamily="Liberation Sans" textLength="15.500" lengthAdjust="spacingAndGlyphs" fill="#15c4ea">AS</text><path d="M0 14h16" stroke="#15c4ea" /></I></NavIcon>
          <NavIcon $w={16} $ml={12}><I><rect width="16" height="16" fill="#ded8c4" /><path d="M3 4v5M8 3v5M13 4v5" stroke="#a06a20" strokeWidth="3" /><path d="M3 11v3M8 10v4M13 11v3" stroke="#fff" /></I></NavIcon>
          <Label ml={5} w={116}>YM2149 sound gene...</Label>
          <NavIcon $w={14} $ml={14}><I w={14} h={14}><path d="M1 0h12v11l-5 3-7-2z" fill="#ccc" /><path d="M1 3h12M1 6h12M1 9h12M4 0v13M8 0v13" stroke="#555" strokeWidth=".8" /></I></NavIcon>
          <Label ml={6} w={113}>[C#] YM2149 Steam...</Label>
          <NavIcon $w={14} $ml={16}><I w={14} h={14}><circle cx="8" cy="8" r="6" fill="#b01040" /><circle cx="6.500" cy="6.500" r="6.300" fill="#f59a20" /><circle cx="5" cy="5" r="2.500" fill="#ffe890" /></I></NavIcon>
          <Label ml={6} w={112}>Where you want to ...</Label>
          <NavIcon $w={12} $ml={20}><I w={11} h={14}><path d="M0 0h7l4 4v10H0z" fill="#f4f4f4" /><path d="M7 0v4h4" stroke="#999" /></I></NavIcon>
          <Label ml={6} w={111}>NESRGB - RGB/S-Vi...</Label>
          <NavIcon $w={16} $ml={18}><I><rect width="16" height="16" fill="#d987c2" /><path d="M2 2l6 1 2 6 5 3-6 3-7-2z" fill="#4ab4d8" /><path d="M0 12l4 2-4 2z" fill="#f3d23a" /><path d="M4 4l3 4" stroke="#23405a" strokeWidth="2" /></I></NavIcon>
          <Label ml={5} w={117}>Please Pump In Som...</Label>
          <Spacer />
          <NavIcon $w={8} $ml={0}><I w={8} h={8}><path d="M1 1l3 3-3 3M4.500 1l3 3-3 3" stroke="#aaa" strokeWidth="1.200" /></I></NavIcon>
          <NavIcon $w={13} />
        </Bookmarks>
        <PageArea>
          <Thread>
            <BoardBar>
              <span>[</span>{bars(lnk)}<span>/</span>
              <I w={12} h={12}><path d="M1 5A5 5 0 0 1 10 3M11 7A5 5 0 0 1 2 9" stroke={lnk} strokeWidth="1.800" /><path d="M11.500 0v5h-5zM.5 12V7h5z" fill={lnk} /></I>
              <span>/</span>
              <I w={13} h={12}><path d="M6.500 1C10 1 12 2.800 12 5s-2 4-5.500 4L3 11l.5-2.500C2 8 1 6.500 1 5c0-2.200 2-4 5.500-4z" stroke={lnk} strokeWidth="1.300" /></I>
              <span>/</span>
              <I w={12} h={12}><path d="M2 10l8-8" stroke={lnk} strokeWidth="1.500" strokeDasharray="4 2.500" /><path d="M6 0.500h5.500V6zM6 11.500H.5V6z" fill={lnk} /></I>
              <span>]</span>
              <Spacer />
              <Label w={4}>[</Label>
              <Label w={103} color={lnk} ml={-2}>Traditional Games</Label>
              <Label w={4}>/</Label>
              <Label w={7} color={lnk}>+</Label>
              <Label w={59} ml={-3}>]</Label>
            </BoardBar>
            <Posts>
              <Post w={286} h={102} no="32796550">
                <Quote no="32796550" />
                <PostLine><Label w={146}>Tagging some music files</Label></PostLine>
                <PostLine>
                  <I w={16} h={12}><rect width="16" height="12" rx="2" fill="#c4110f" /><path d="M5.500 2.500L11 6 5.500 9.500z" fill="#fff" /></I>
                  <Label ml={4} w={106} color={lnk} line>Onra - Mechanical</Label>
                </PostLine>
              </Post>
              <Post w={581} h={100} no="32796597">
                <Quote no="32796550" />
                <PostLine />
                <PostLine><Label w={495}>Playing Spintires, might catch up on the shows that came out this weekend a bit later</Label></PostLine>
              </Post>
              <Post w={415} h={116} no="32796604">
                <Quote no="32796589" />
                <PostLine><Label w={328}>Meanwhile of episode 7 after she barfed during their date.</Label></PostLine>
                <PostLine />
                <PostLine><Label w={176} color={lnk} line>http://pastebin.com/yypKrDaQ</Label></PostLine>
              </Post>
              <Post w={286} h={100} no="32796607">
                <Quote no="32796550" />
                <PostLine><Label w={149}>Edging to Yosino's works.</Label></PostLine>
              </Post>
            </Posts>
          </Thread>
          <ReplyColumn>
            <ReplyPanel>
              <ReplyHead>
                <Check />
                <Label ml={8} w={119} color={lnk}>Thread No.32793309</Label>
                <Spacer />
                <I w={9} h={9}><path d="M1 1l7 7M8 1L1 8" stroke={lnk} strokeWidth="2.600" /></I>
              </ReplyHead>
              <ReplyFields>
                <ReplyInput $w={29} $bg="linear-gradient(#f6f6f6,#ddd)"><Label ml={6} w={8} color="#000">+</Label></ReplyInput>
                <ReplyInput $w={89}><Label w={28} color="#222">laTM</Label></ReplyInput>
                <ReplyInput $w={90}><Label w={37} color="#a9a9a9">E-mail</Label></ReplyInput>
                <ReplyInput $w={89}>
                  <Label w={43} color="#a9a9a9">Subject</Label>
                  <I w={34} h={20}><path d="M5.500 7l5.500 11H0zM20 7h11l-5.500 11z" fill={lnk} /></I>
                </ReplyInput>
              </ReplyFields>
              <CommentBox>
                <Label w={56} color="#a9a9a9">Comment</Label>
                <I w={8} h={8}><path d="M0 8l8-8M4 8l4-4" stroke="#444" /></I>
              </CommentBox>
              <ReplyInput $w={298} $h={22}><Label w={155} color="#a9a9a9">Focus to load reCAPTCHA</Label></ReplyInput>
              <FileRow>
                <FormButton $w={86}><Label w={71} size={14}>Choose files</Label></FormButton>
                <Label ml={2} w={89}>No selected file</Label>
                <Spacer />
                <FormButton $w={57}><Label w={41} size={14}>Submit</Label></FormButton>
              </FileRow>
              <SoundRow><Check /><Label ml={4} w={44}>Sounds</Label></SoundRow>
            </ReplyPanel>
            <Counter><Label w={21} color="#f00">658</Label><Label w={21}>/ 74</Label><Label w={15}>/ 8</Label><Label w={7}>2</Label></Counter>
          </ReplyColumn>
          <PageScroll $size={18} $bg="#f1f1f1">
            <ScrollArrow $dir="up" $m="7px 0 0" />
            <Spacer />
            <FlatThumb />
            <ScrollArrow $dir="down" $m="0 0 7px" />
          </PageScroll>
        </PageArea>
      </ChromeBody>
    </ChromeWindow>
  );
}

/* ---------- Audacity ---------- */

const AuWindow = styled(Window)`
  border: 1px solid #555;
  border-radius: 6px 6px 4px 4px;
  background: linear-gradient(180deg, #fdfdfd 0, #ededed 60px, #9a9a9a 130px, #8d8d8d 400px, #444 480px, #999 530px);
`;
const AuTitle = styled.header`
  display: flex;
  flex: none;
  height: 28px;
  background:
    radial-gradient(ellipse 5px 5px at 541px 7px, #f0c890, transparent),
    radial-gradient(ellipse 5px 5px at 541px 14px, #b0b0e0, transparent),
    radial-gradient(ellipse 5px 5px at 541px 21px, #f0c890, transparent),
    radial-gradient(ellipse 26px 4px at 580px 7px, #bbb, transparent),
    radial-gradient(ellipse 20px 4px at 574px 23px, #bbb, transparent),
    linear-gradient(90deg, transparent 918px, #444 926px 936px, transparent 944px),
    linear-gradient(90deg, #fafafa, #fff 400px, #eee 580px, #f2f2f2 720px, #fff 800px);
`;
const AuClient = styled.div`
  display: flex;
  flex-direction: column;
  width: 946px;
  height: 500px;
  margin-left: 4px;
  border: 1px solid #707070;
  background: #f0f0f0;
`;
const AuRow = styled.div`
  display: flex;
  align-items: center;
  flex: none;
  height: ${p => p.$h}px;
  border-bottom: 1px solid #9d9d9d;
  border-top: 1px solid #fff;
  overflow: hidden;
`;
const Grip = styled.i`
  flex: none;
  align-self: stretch;
  width: 10px;
  margin-left: ${p => p.$ml || 0}px;
  border-right: 1px solid #9d9d9d;
  background: repeating-linear-gradient(180deg, #a8a8a8 0 1px, #fff 1px 2px, transparent 2px 5px) 3px 3px / 4px calc(100% - 6px) no-repeat;
`;
const BarEnd = styled.i`
  align-self: stretch;
  width: 4px;
  margin-left: ${p => p.$ml}px;
  border: solid #9d9d9d;
  border-width: 0 1px;
`;
const ToolGrid = styled.div`
  display: grid;
  grid-template-columns: repeat(3, 28px);
  grid-auto-rows: 28px;
  margin-left: 1px;
`;
const ToolCell = styled.div`
  display: flex;
  align-items: center;
  justify-content: center;
  border: 1px solid #a0a0a0;
  border-color: ${p => (p.$on ? "#555 #fff #fff #555" : "#fff #a0a0a0 #a0a0a0 #fff")};
`;
const Transport = styled.div`
  display: flex;
  gap: 6px;
  width: 309px;
  padding: 0 0 1px 7px;
`;
const RoundButton = styled.div`
  display: flex;
  align-items: center;
  justify-content: center;
  width: 44px;
  height: 44px;
  padding: 0 2px 1px 0;
  border-radius: 50%;
  background: linear-gradient(135deg, #fff, #f2f2f2 35%, #ebebeb 70%, #f8f8f8);
  box-shadow: 2px 2px 4px #999, -2px -2px 3px #fff, inset -1px -1px 3px #ddd;
`;
const EditButton = styled.div`
  display: flex;
  align-items: center;
  justify-content: center;
  flex: none;
  width: 27px;
  height: 26px;
  margin-left: ${p => p.$ml || 0}px;
  border: 1px solid #a0a0a0;
  border-color: #fff #a0a0a0 #a0a0a0 #fff;
`;
const IconSlot = styled.div`
  flex: none;
  margin-left: ${p => p.$ml || 0}px;
`;
const TrackArea = styled.div`
  display: flex;
  flex: none;
  height: 240px;
  background: #a0a0a0;
`;
const TrackFrame = styled.div`
  display: flex;
  width: 919px;
  height: 235px;
  margin: 4px 7px 0 3px;
  border: 1px solid #000;
  border-width: 1px 2px 2px 1px;
`;
const TrackPanel = styled.div`
  display: flex;
  flex-direction: column;
  align-items: center;
  width: 96px;
  border-right: 1px solid #000;
  background: #f0f0f0;
  font: 11.500px ${arial};
`;
const PanelRow = styled.div`
  display: flex;
  align-items: center;
  align-self: stretch;
  height: ${p => p.$h}px;
  padding-left: ${p => p.$pl || 0}px;
  border-bottom: ${p => (p.$line ? 1 : 0)}px solid #888;
  svg + div { border-left: 1px solid #888; }
`;
const PanelGap = styled.i`height: 2px;`;
const PanelButton = styled.div`
  display: flex;
  align-items: center;
  justify-content: center;
  flex: 1;
  align-self: stretch;
  border-right: 1px solid #888;
  border-top: 1px solid #888;
`;
const CollapseButton = styled.div`
  display: flex;
  align-items: center;
  justify-content: center;
  width: 62px;
  height: 17px;
  margin-top: auto;
  border: 1px solid #888;
  border-bottom-color: #ccc;
`;
const HScrollRow = styled.div`
  display: flex;
  flex: none;
  height: 18px;
`;
const Column = styled.div`
  display: flex;
  flex-direction: column;
  align-items: flex-start;
  gap: ${p => p.$gap || 0}px;
  margin-left: ${p => p.$ml || 0}px;
  padding-bottom: 5px;
  width: ${p => p.$w}px;
  font: 12px/16px ${arial};
`;
const RateBox = styled.div`
  display: flex;
  align-items: center;
  justify-content: space-between;
  width: 80px;
  height: 22px;
  padding: 0 4px 0 6px;
  border: 1px solid #e2e2e2;
  border-radius: 2px;
  background: #fff;
`;
const Rule = styled.i`
  align-self: center;
  margin: 12px 0 0 ${p => p.$ml}px;
  width: 1px;
  height: 26px;
  background: #999;
`;
const SnapBox = styled.div`
  display: flex;
  align-items: center;
  margin: 13px 0 0 10px;
  font: 12px ${arial};
`;
const TimeBox = styled.div`
  display: flex;
  align-items: center;
  justify-content: space-between;
  width: 150px;
  height: 21px;
  padding-left: 4px;
  border: 1px solid #777;
  border-color: #666 #fff #fff #666;
  background: #c0c0c0;
  font: 13px ${tahoma};
  color: #10109a;
`;
const TimeCaret = styled.div`
  display: flex;
  align-items: center;
  justify-content: center;
  flex: none;
  width: 9px;
  height: 18px;
  background: #d6d3ce;
  border: 1px solid #fff;
`;
const RadioRow = styled.div`
  display: flex;
  align-items: center;
  height: 16px;
`;

function Slider({ w, thumb, a = "-", b = "+", h = 27 }) {
  const ticks = 11;
  return (
    <svg width={w} height={h} viewBox={`0 0 ${w} ${h}`}>
      {a === "-" ? <path d="M1 7.500h5" stroke="#000" /> : <text x="0" y="10" fontSize="9" fontFamily="Liberation Sans">{a}</text>}
      {b === "+" ? <path d={`M${w - 8} 7.500h5M${w - 5.500} 5v5`} stroke="#000" /> : <text x={w - 9} y="10" fontSize="9" fontFamily="Liberation Sans">{b}</text>}
      {Array.from({ length: ticks }, (_, i) => {
        const x = 1.5 + Math.round((i * (w - 4)) / (ticks - 1));
        return <path key={i} d={`M${x} ${i % 10 ? 15 : 12}V18`} stroke="#a0a0a0" />;
      })}
      <path d={`M1 18.500H${w}`} stroke="#a0a0a0" />
      <g transform={`translate(${thumb - 5} 9.500)`}>
        <path d="M1.500.5h7l1 1v7.500L5.500 13.500 1 9V1z" fill="#d5d8ec" stroke="#223" />
        <path d="M3 4.500h4M3 7.500h4" stroke="#77a" />
      </g>
    </svg>
  );
}

const speaker = <I w={15} h={14}><path d="M0 5h3l3-4v12L3 9H0z" fill="#000" /><path d="M8 5q1.500 2 0 4M10 3q3 4 0 8M12 1q4 6 0 12" stroke="#000" /></I>;
const mic = <I w={20} h={20}><path d="M1 19L10 8l3 3z" fill="#000" stroke="#000" /><circle cx="14" cy="6" r="5" fill="#777" stroke="#000" /><path d="M11 3l6 6M10.500 6l4 4M14 2l4 4M17 2l-6 7" stroke="#ddd" strokeWidth=".7" /></I>;
const lens = extra => <I w={22} h={22}><circle cx="13" cy="7" r="4.500" fill="#fff" stroke="#222" strokeWidth="1.300" /><path d="M10 10l-6 7" stroke="#111" strokeWidth="2.600" />{extra}</I>;

const toolCells = [
  <I w={12} h={20}><path d="M2 2.500h3M7 2.500h3M2 17.500h3M7 17.500h3M6 3v14" stroke="#000" strokeWidth="1.600" /></I>,
  <I w={26} h={22}><path d="M8.500 1.500h9l-4.500 5zM8.500 20.500h9l-4.500-5z" stroke="#000" fill="#fff" /><path d="M0 11c8 1 14 1 25-3" stroke="#6a74e0" strokeWidth="3" /><path d="M12 8h3v4h-3z" fill="#fff" /></I>,
  <I w={14} h={18}><path d="M3 11l5-9q3-1 4 2l-5 9-4 3z" fill="#fff" stroke="#000" strokeWidth="1.300" /><path d="M6 3l5 3M3 11l4 2" stroke="#000" /></I>,
  <I w={18} h={18}><circle cx="11" cy="6" r="4.500" fill="#fff" stroke="#000" /><path d="M8 9l-6 6" stroke="#000" strokeWidth="2.600" /></I>,
  <I w={18} h={10}><path d="M2 5h14" stroke="#000" strokeWidth="2" /><path d="M0 5l5-4.500v9zM18 5l-5-4.500v9z" fill="#000" /></I>,
  <I w={14} h={15}><path d="M7 0v15M1 3.500l12 8M13 3.500l-12 8" stroke="#000" strokeWidth="2.200" /></I>,
];
const transport = [
  <I w={14} h={15}><path d="M1 0v15M8 1L2 7.500 8 14zM14 1L8 7.500 14 14z" fill="#b07cd0" stroke="#9c68c0" /></I>,
  <I w={16} h={16}><path d="M1.500 1L15 8 1.500 15z" fill="#6bd36b" stroke="#4fae4f" /></I>,
  <I w={18} h={18}><circle cx="9" cy="9" r="7.500" fill="#c27878" stroke="#a85c5c" /></I>,
  <I w={14} h={14}><path d="M1 1h4.500v12H1zM8.500 1H13v12H8.500z" fill="#4b7cf0" stroke="#3a62d0" /></I>,
  <I w={14} h={14}><path d="M1 1h12v12H1z" fill="#bcab84" stroke="#a99870" /></I>,
  <I w={14} h={15}><path d="M13 0v15M6 1l6 6.500L6 14zM0 1l6 6.500L0 14z" fill="#b07cd0" stroke="#9c68c0" /></I>,
];
const edits = [
  [0, <I w={22} h={18}><path d="M0 5h3l1-2 2 5 2-5 1 3M14 5l1-2 2 5 1-3h3" stroke="#666" strokeWidth=".8" /><path d="M14 1l-4 10M9 7l4 5" stroke="#111" /><circle cx="7.500" cy="13" r="2" stroke="#2030c0" strokeWidth="1.500" /><circle cx="13.500" cy="14" r="2" stroke="#2030c0" strokeWidth="1.500" /></I>],
  [0, <I w={20} h={16}><path d="M.5.500h11v11H.5z" fill="#b5b5b5" stroke="#111" /><path d="M2 6l1.500-2 2 5 2-6 2 5" stroke="#444" /><path d="M9.500 4.500h7l3 3v8h-10z" fill="#fff" stroke="#1a24b0" /><path d="M11 10l1.500-2 2 4 2-4 1 2" stroke="#555" /></I>],
  [0, <I w={18} h={18}><path d="M.5 1.500h13v12H.5z" fill="#b8a93a" stroke="#222" /><path d="M4 0h6v3H4z" fill="#ddd" stroke="#222" /><path d="M7.500 7.500h7l3 3v7h-10z" fill="#fff" stroke="#1a24b0" /><path d="M9 13l1.500-2 2 4 2-4 1 2" stroke="#555" /></I>],
  [0, <I w={20} h={14}><path d="M0 7h5M15 7h5" stroke="#2030c8" /><path d="M5.500 7V1.500h1.500v11h2v-11h2v11h2v-11h1.500V7" stroke="#2030c8" /></I>],
  [0, <I w={20} h={14}><path d="M.5 12V3q2-3 2.500 0v8q1 2 2.500-1V1M14.500 12V3q2-3 2.500 0v8q1 2 2.500-1V1" stroke="#2030c8" strokeWidth="1.100" /><path d="M6 7h8" stroke="#111" /></I>],
  [15, <I w={14} h={11}><path d="M1 1v5h5M1.500 6Q4 2 8 2.500q4 1 4.500 3.500Q12.500 9 9 10" stroke="#111" strokeWidth="1.400" /></I>],
  [0, <I w={14} h={11}><path d="M13 1v5H8M12.500 6Q10 2 6 2.500q-4 1-4.500 3.500Q1.500 9 5 10" stroke="#999" strokeWidth="1.400" /></I>],
  [14, <I w={16} h={18}><circle cx="8" cy="10.500" r="6.500" fill="#fff" stroke="#111" strokeWidth="1.500" /><path d="M6 1h4M8 1v3" stroke="#111" strokeWidth="2" /><path d="M5 7l3 4 3-3" stroke="#2030c8" strokeWidth="1.500" /></I>],
  [14, lens(<path d="M13 4.500v5M10.500 7h5" stroke="#1a24b0" strokeWidth="1.800" />)],
  [0, lens(<path d="M10.500 7h5" stroke="#1a24b0" strokeWidth="1.800" />)],
  [0, lens(<path d="M9 18h12M11 15.500l3 2.500-3 2.500M19 15.500l-3 2.500 3 2.500" stroke="#1a24b0" />)],
  [0, lens(<path d="M9 18h12M9.500 15v6M20.500 15v6" stroke="#1a24b0" strokeWidth="1.300" />)],
];

function MeterScale({ peak, tint, icon }) {
  return (
    <svg width={162} height={55} viewBox="0 0 162 55" fontFamily="Liberation Sans" fontSize="10.500">
      <text x="2" y="10">L</text><text x="2" y="24">R</text>
      <path d="M11 .5H157M11 15.500H157" stroke="#a0a0a0" />
      <path d="M11 13.500H157M11 28.500H157" stroke="#fff" />
      <path d="M155.500 0v14M155.500 15v14" stroke="#a0a0a0" /><path d="M157.500 0v14M157.500 15v14" stroke="#fff" />
      <path d="M11.500 0v14M11.500 15v14" stroke={tint} />
      {peak && <path d="M145.500 1v12M145.500 16v12" stroke="#6a6af5" strokeWidth="2" />}
      {[12, 36, 60, 83, 107, 131, 155].map(x => <path key={x} d={`M${x + 0.5} 29v3`} stroke="#000" />)}
      {["-96", "-72", "-48", "-24", "0"].map((t, i) => (
        <text key={t} x={[60, 83, 107, 131, 152][i]} y="43.500" textAnchor="middle">{t}</text>
      ))}
      <g transform={icon === "mic" ? "translate(5 33)" : "translate(8 35)"}>{icon === "mic" ? mic : speaker}</g>
      <path d="M27.500 50.500v-14h17" stroke="#fff" fill="none" /><path d="M27.500 50.500h17v-14" stroke="#888" fill="none" />
      <path d="M31 41h11l-5.500 6z" fill="#000" />
    </svg>
  );
}

/* Loudness of the visible seconds as [pixel, level] pairs. */
const LEVELS = [
  [0, .78], [25, .74], [44, .62], [46, .6], [48, .95], [60, .85], [72, .66], [86, .52], [92, .68], [104, .6], [117, .6], [119, 1], [134, .98],
  [140, .85], [160, .76], [176, .52], [189, .45], [191, .88], [203, .74], [212, .52], [228, .38], [246, .22], [262, .3], [265, .92], [276, .96], [290, .9],
  [300, .6], [315, .66], [330, .55], [340, .92], [350, .62], [368, .6], [384, .78], [392, .5], [403, .32], [407, 1], [420, .8], [431, .98], [442, .72], [470, .62],
  [476, .4], [480, .76], [486, .88], [508, .78], [522, .6], [530, .32], [540, .25], [549, .35], [554, .94], [582, .84], [612, .74], [619, .35], [627, .95],
  [644, .7], [654, .52], [682, .74], [690, .35], [695, .35], [697, 1], [728, .92], [750, .62], [763, .42], [766, .5], [769, .96], [780, .8], [789, .6],
];
const levelAt = x => {
  for (let i = 1; i < LEVELS.length; i++) {
    if (x <= LEVELS[i][0]) {
      const [x0, y0] = LEVELS[i - 1];
      const [x1, y1] = LEVELS[i];
      return y0 + ((y1 - y0) * (x - x0)) / (x1 - x0);
    }
  }
  return 0.6;
};
const random = seed => () => {
  seed = (seed * 1664525 + 1013904223) % 4294967296;
  return seed / 4294967296;
};
function wave(seed, mid) {
  const r = random(seed);
  let peak = "";
  let body = "";
  let gaps = "";
  for (let x = 0; x < 789; x++) {
    const l = levelAt(x);
    const up = 55 * l * (0.54 + 0.48 * Math.pow(r(), 1.5));
    const dn = 55 * l * (0.5 + 0.48 * Math.pow(r(), 1.5));
    const core = 55 * Math.min(l * 0.55, 0.24 + l * 0.17) * (0.92 + 0.14 * r());
    const coreDn = core * (0.8 + 0.15 * r());
    peak += `M${x + 0.5} ${Math.round(mid - up)}V${Math.round(mid + dn)}`;
    body += `M${x + 0.5} ${Math.round(mid - core)}V${Math.round(mid + coreDn)}`;
    if (r() < 0.045) {
      gaps += r() < 0.5 ? `M${x + 0.5} ${mid - 55}V${Math.round(mid - core * (0.4 + 0.8 * r()))}` : `M${x + 0.5} ${mid + 54}V${Math.round(mid + core * (0.4 + 0.8 * r()))}`;
    }
  }
  return { peak, body, gaps };
}
const TRACKS = [{ top: 0, ...wave(20, 56) }, { top: 119, ...wave(77, 175) }];

function Waveforms() {
  return (
    <svg width={820} height={232} viewBox="0 0 820 232" fontFamily="Liberation Sans" fontSize="12" textAnchor="end">
      <rect width="820" height="232" fill="#a0a0a0" />
      {TRACKS.map(t => (
        <g key={t.top}>
          <rect x="0" y={t.top} width="30" height="113" fill="#f0f0f0" />
          {[["1.0", 13, 1], ["0.5", 34], ["0.0", 62, 1], ["-0.5", 89], ["-1.0", 109, 1]].map(([s, y, b]) => (
            <text key={s} x="25" y={t.top + y - 1} fontWeight={b ? 700 : 400}>{s}</text>
          ))}
          <path d={`M27 ${t.top + 29.5}h2M25.500 ${t.top + 56.500}h4M27 ${t.top + 84.500}h2`} stroke="#000" />
          <rect x="31" y={t.top} width="789" height="113" fill="#c0c0c0" />
        </g>
      ))}
      <path d="M30.500 112.500H820M30.500 118.500H820" stroke="#000" />
      {TRACKS.map(t => (
        <g key={t.top} transform="translate(31 0)">
          <path d={t.peak} stroke="#3232c8" />
          <path d={t.body} stroke="#6464dc" />
          <path d={t.gaps} stroke="#c0c0c0" />
        </g>
      ))}
    </svg>
  );
}

function TimeRuler() {
  const first = 1088 - 967;
  return (
    <svg width={944} height={28} viewBox="0 0 944 28" fontFamily="Liberation Sans" fontSize="13" fontWeight="700" textAnchor="middle">
      <rect width="944" height="28" fill="#9494ac" />
      <path d="M0 .5H944" stroke="#f8f8f8" /><path d="M0 20.500H944" stroke="#555" /><path d="M0 21.500H944" stroke="#c0c0cc" />
      {["12.0", "12.5", "13.0", "13.5", "14.0", "14.5"].map((t, i) => <text key={t} x={first + i * 140.8} y="18">{t}</text>)}
      {Array.from({ length: 33 }, (_, i) => i - 4).map(i => {
        const x = Math.round(first + i * 28.16) + 0.5;
        return <path key={i} d={`M${x} 22v${i % 5 ? 3 : 5}`} stroke="#000" />;
      })}
      <path d="M0 27.500H944" stroke="#000" />
    </svg>
  );
}

const Headphones = ({ s = 16 }) => (
  <svg width={s} height={s} viewBox="0 0 16 16" fill="none">
    <path d="M2 11V8a6 6 0 0 1 12 0v3" stroke="#15157a" strokeWidth="2.200" />
    <path d="M5 14V8q3-4 6 0v6z" fill="#f59a10" /><path d="M5 10h6v2H5z" fill="#d8200c" /><path d="M6 8h4v2H6z" fill="#ffe030" />
    <rect x="0" y="9" width="4" height="6" rx="1.500" fill="#15157a" /><rect x="12" y="9" width="4" height="6" rx="1.500" fill="#15157a" />
  </svg>
);

const Time = ({ value }) => (
  <TimeBox><Label w={135}>{value}</Label><TimeCaret><Caret $mr={0} $s={3} /></TimeCaret></TimeBox>
);
const Radio = ({ on }) => (
  <I w={12} h={12}><circle cx="6" cy="6" r="5.500" fill="#f4f4f4" stroke="#8a8a8a" />{on && <circle cx="6" cy="6" r="3.300" fill="#1c6f9c" stroke="#0b3550" />}</I>
);

function Audacity() {
  const menu = [["File", 6, 19], ["Edit", 13, 20], ["View", 14, 25], ["Transport", 14, 51], ["Tracks", 14, 34], ["Generate", 14, 47], ["Effect", 14, 30], ["Analyze", 14, 41], ["Help", 14, 25]];
  return (
    <AuWindow $x={961} $y={517} $w={958} $h={533}>
      <AuTitle>
        <TitleText $pad="6px 0 0 5px"><Headphones s={15} /></TitleText>
        <TitleText $pad="6px 0 0 5px"><Label w={171}>02. 白金ディスコ -instrumental-</Label></TitleText>
        <Spacer />
        <Caption $w={103} $h={19} $m="0 7px 0 0" $edge="#999">
          <CaptionButton $first $w={28} $edge="#aaa" $bg="transparent">{Glyphs.min}</CaptionButton>
          <CaptionButton $w={27} $edge="#aaa" $bg="transparent">{Glyphs.max}</CaptionButton>
          <CaptionButton $w={48} $edge="#aaa" $bg="transparent">{Glyphs.close}</CaptionButton>
        </Caption>
      </AuTitle>
      <AuClient>
        <MenuBar $h={20}>{menu.map(([t, ml, w]) => <Label key={t} ml={ml} w={w} color="#6d6d6d">{t}</Label>)}</MenuBar>
        <AuRow $h={57}>
          <Grip />
          <ToolGrid>{toolCells.map((c, i) => <ToolCell key={i} $on={i === 0}>{c}</ToolCell>)}</ToolGrid>
          <Grip $ml={1} />
          <Transport>{transport.map((c, i) => <RoundButton key={i}>{c}</RoundButton>)}</Transport>
          <Grip />
          <IconSlot><MeterScale peak tint="#2f9a3f" icon="speaker" /></IconSlot>
          <IconSlot $ml={-1}><MeterScale tint="#8c3a3a" icon="mic" /></IconSlot>
          <BarEnd $ml={0} />
        </AuRow>
        <AuRow $h={28}>
          <Grip />
          <IconSlot $ml={7}>{speaker}</IconSlot>
          <IconSlot $ml={8}><Slider w={124} thumb={119} /></IconSlot>
          <IconSlot $ml={4}>{mic}</IconSlot>
          <IconSlot $ml={7}><Slider w={123} thumb={84} /></IconSlot>
          <Grip $ml={5} />
          {edits.map(([ml, icon], i) => <EditButton key={i} $ml={ml}>{icon}</EditButton>)}
          <Grip $ml={1} />
          <EditButton $ml={1}><I w={16} h={16}><path d="M1.500 1L15 8 1.500 15z" fill="#6bd36b" stroke="#4fae4f" /></I></EditButton>
          <IconSlot $ml={5}><Slider w={92} thumb={29} /></IconSlot>
        </AuRow>
        <AuRow $h={28}>
          <Grip />
          <Select $w={106} $ml={1}><SelectText><Label w={84}>Windows DirectSo</Label></SelectText><Caret /></Select>
          <IconSlot $ml={6}>{speaker}</IconSlot>
          <Select $w={169} $ml={4}><SelectText><Label w={145}>Speakers (Conexant HD Audio</Label></SelectText><Caret /></Select>
          <IconSlot $ml={3}>{mic}</IconSlot>
          <Select $w={168} $ml={2}><SelectText><Label w={145}>Stereo Mix (Conexant HD Aud</Label></SelectText><Caret /></Select>
          <Select $w={108} $ml={1}><SelectText><Label w={87}>2 (Stereo) Input C</Label></SelectText><Caret /></Select>
          <BarEnd $ml={4} />
        </AuRow>
        <TimeRuler />
        <TrackArea>
          <TrackFrame>
            <TrackPanel>
              <PanelRow $h={16} $line>
                <I w={15} h={15}><path d="M4 3.500l7 8M11 3.500l-7 8" stroke="#000" strokeWidth="1.600" /></I>
                <PanelRow $h={15} $pl={3}><Label w={51}>02. 白金デ</Label></PanelRow>
                <Spacer />
                <Caret $s={5} />
              </PanelRow>
              <PanelRow $h={17} $pl={3}><Label w={81}>Stereo, 44100Hz</Label></PanelRow>
              <PanelRow $h={16} $pl={3}><Label w={51}>16-bit PCM</Label></PanelRow>
              <PanelRow $h={18} $line><PanelButton><Label w={23}>Mute</Label></PanelButton><PanelButton><Label w={21}>Solo</Label></PanelButton></PanelRow>
              <PanelGap />
              <Slider w={76} thumb={28} h={29} />
              <Slider w={76} thumb={38} a="L" b="R" h={29} />
              <CollapseButton><I w={12} h={7}><path d="M6 0l6 7H0z" fill="#999" /></I></CollapseButton>
            </TrackPanel>
            <Waveforms />
          </TrackFrame>
          <ScrollTrack $size={17} $bg="#f0f0f0">
            <ScrollArrow $dir="up" $m="7px 0 8px" />
            <ScrollThumb $vertical $w={15} $h={77}><Ridges $vertical /></ScrollThumb>
            <Spacer />
            <ScrollArrow $dir="down" $m="0 0 6px" />
          </ScrollTrack>
        </TrackArea>
        <HScrollRow>
          <IconSlot $ml={135} />
          <ScrollTrack $horizontal $size={17}>
            <ScrollArrow $dir="left" $m="0 0 0 6px" />
            <ScrollThumb $w={15} $h={15} $m="0 712px 0 43px" />
            <ScrollArrow $dir="right" $m="0 6px 0 0" />
          </ScrollTrack>
        </HScrollRow>
        <AuRow $h={57}>
          <Grip />
          <Column $ml={1} $w={96} $gap={3}><Label w={95}>Project Rate (Hz):</Label><RateBox><Label w={35}>44100</Label><Caret $mr={0} $s={3.5} /></RateBox></Column>
          <Rule $ml={5} />
          <SnapBox><Label w={45}>Snap To</Label><Check $s={13} $edge="#777" $m="0 0 0 3px" /></SnapBox>
          <Column $ml={6} $w={151} $gap={3}><Label w={82}>Selection Start:</Label><Time value="0 0  h  0 0  m  0 0 . 0 0 0  s" /></Column>
          <Column $ml={6} $w={151} $gap={3}>
            <RadioRow><Radio /><Label ml={5} w={22}>End</Label><IconSlot $ml={8}><Radio on /></IconSlot><Label ml={4} w={38}>Length</Label></RadioRow>
            <Time value="0 0  h  0 0  m  2 6 . 6 2 6  s" />
          </Column>
          <Rule $ml={5} />
          <Column $ml={7} $w={151} $gap={3}><Label w={82}>Audio Position:</Label><Time value="0 0  h  0 0  m  0 0 . 0 0 0  s" /></Column>
        </AuRow>
        <StatusBar $h={22}>
          <Spacer />
          <StatusPane $w={144}><Label ml={1} w={96}>Actual Rate: 44100</Label><GripDots /></StatusPane>
        </StatusBar>
      </AuClient>
    </AuWindow>
  );
}

/* ---------- Taskbar ---------- */

const Bar = styled.footer`
  position: absolute;
  left: 0;
  top: 1050px;
  width: 1920px;
  height: 30px;
  border-top: 1px solid #6d6d70;
  overflow: hidden;
`;
const Wallpaper = styled.svg`
  position: absolute;
  left: 0;
  top: 0;
`;
const BarItems = styled.div`
  position: relative;
  display: flex;
  align-items: center;
  height: 29px;
`;
const Task = styled.div`
  display: flex;
  align-items: center;
  justify-content: center;
  flex: none;
  width: ${p => p.$w || 42}px;
  height: 28px;
  margin-left: ${p => p.$ml || 0}px;
  border-radius: 3px;
  ${p => p.$open && css`
    border: 1px solid #9a9a9c;
    background: linear-gradient(135deg, rgba(255,255,255,.5), rgba(255,255,255,.18) 50%, rgba(255,255,255,.08) 52%);
  `}
  ${p => p.$active && css`
    border: 1px solid #ccc;
    background: linear-gradient(135deg, #e8e8e8, #bdbdbd 50%, #999 52%, #b0b0b0);
  `}
`;
const TaskStack = styled.i`
  width: 4px;
  height: 28px;
  border-right: 1px solid #999;
`;
const ShowDesktop = styled.div`
  width: 14px;
  height: 29px;
  margin-left: 15px;
  border: 1px solid #8d9194;
  background: linear-gradient(135deg, rgba(255,255,255,.4), rgba(60,60,60,.5));
`;
const Orb = styled.div`
  position: absolute;
  left: 8px;
  top: 1045px;
  width: 38px;
  height: 38px;
  border-radius: 50%;
  display: flex;
  align-items: center;
  justify-content: center;
  padding-bottom: 3px;
  border: 1px solid #9fc4d8;
  background: radial-gradient(ellipse at 50% 100%, #49c8f0, #1a6a98 45%, #1c3c58 75%, #6f93a8);
`;

function Taskbar() {
  return (
    <>
      <Bar>
        <Wallpaper width="1920" height="30" viewBox="0 0 1920 30">
          <defs><filter id="soft" x="-5%" y="-50%" width="110%" height="200%"><feGaussianBlur stdDeviation="3" /></filter></defs>
          <rect width="1920" height="30" fill="#20232a" />
          <g filter="url(#soft)">
            <path d="M525 -5h60l14 40h-56z" fill="#c493a0" />
            <path d="M585 -5h60l20 40h-66z" fill="#5c2430" />
            <path d="M650 -5h30l30 40h-40z" fill="#2b2022" />
            <path d="M685 -5h125l-50 40h-50z" fill="#39435a" />
            <path d="M815 -5H1740l30 40H758z" fill="#cfa2ad" />
            <path d="M905 35Q960 12 1040 3Q1150 -5 1300 0Q1400 8 1490 35z" fill="#cdd4d7" stroke="#4a4448" strokeWidth="4" />
            <path d="M1385 -3h45l-10 14h-20z" fill="#151515" />
            <path d="M1722 -5L1752 35H1925V-5z" fill="#9a9fa3" stroke="#3a3638" strokeWidth="5" />
            <path d="M1760 35q40-16 90-20t80-20v40z" fill="#62676b" />
          </g>
          <rect width="1920" height="7" fill="rgba(255,255,255,.08)" />
        </Wallpaper>
        <BarItems>
          <Task $open $ml={60} $w={37}><I w={16} vb="0 0 16 16"><circle cx="8" cy="8" r="7" fill="#e8c01c" /><path d="M8 8L2 4a7 7 0 0 1 12.500 1z" fill="#db3a2a" /><path d="M8 8L2 4a7 7 0 0 0 5 11z" fill="#33a04a" /><circle cx="8" cy="8" r="3.400" fill="#fff" /><circle cx="8" cy="8" r="2.500" fill="#3a78d8" /></I></Task>
          <TaskStack />
          <Task $ml={5}><I w={18} h={18}><path d="M3.500 9.500h11Q14 4 9 4T3.500 9.500 9 15q4 0 5-3" stroke="#39a9ec" strokeWidth="3" /><path d="M2 15Q-1 10 8 4t9-1" stroke="#f3c11d" strokeWidth="1.500" /></I></Task>
          <Task $open $ml={4}><I w={18} h={18}><circle cx="9" cy="9" r="8" fill="#cfdcf0" stroke="#88a" /><rect x="4" y="4" width="10" height="10" rx="2" fill="#3a68c0" /><path d="M5 6h4v5H5z" fill="#fff" /><path d="M9 9h4v3H9z" fill="#e86020" /></I></Task>
          <Task $open $ml={4}><I w={18} h={18}><path d="M1 3h6l1 2h9v11H1z" fill="#f0d890" stroke="#b8983a" /><path d="M3 9h12v7H3z" fill="#8cc4ec" /><path d="M6 12h6v4H6z" fill="#f4f4f4" /></I></Task>
          <Task $ml={4}><I w={16}><rect width="16" height="16" fill="#0a7a14" /><path d="M0 4h16M0 8h16M0 12h16M4 0v16M8 0v16M12 0v16" stroke="#064a0a" /><path d="M1 12V4h5l2 4V4h6v5" stroke="#30e040" /><path d="M9 12h5" stroke="#e03020" strokeWidth="2" /></I></Task>
          <Task $active $ml={4}><FtIcon s={18} /></Task>
          <Task $ml={4}><I w={14} h={16}><path d="M1 2q6-3 12 0v6q-1 5-6 8-5-3-6-8z" fill="#d0d0d0" /><path d="M3 6h3M8 6h3M5 11q2 2 4 0" stroke="#222" strokeWidth="1.600" /></I></Task>
          <Task $ml={4}><I><circle cx="8" cy="8" r="6.500" fill="#18aef0" /><circle cx="4" cy="4" r="4" fill="#18aef0" /><circle cx="12" cy="12" r="4" fill="#18aef0" /><text x="8" y="12.500" textAnchor="middle" fontFamily="Liberation Sans" fontWeight="700" fontSize="12" fill="#fff">S</text></I></Task>
          <Task $ml={4}><I w={16}><rect x=".5" y=".5" width="15" height="15" fill="#0c1640" stroke="#5c9cf0" /><text x="8" y="11.500" textAnchor="middle" fontFamily="Liberation Sans" fontSize="9.500" fill="#8cc0ff">Ps</text></I></Task>
          <Task $ml={4}><I w={16}><rect width="16" height="16" fill="#fff" /><path d="M0 16L16 0v5L6 16z" fill="#e8201c" /><path d="M6 16L16 5v5l-5 6z" fill="#f6e020" /><path d="M11 16l5-6v6z" fill="#20a030" /><text x="0" y="12" textLength="16" lengthAdjust="spacingAndGlyphs" fontFamily="Liberation Sans" fontWeight="700" fontSize="13" fill="#000">AY</text></I></Task>
          <Task $ml={4}><I w={16} h={12}><rect width="16" height="12" fill="#555" stroke="#888" /><path d="M3 4h3M9 3l3 3M5 9h7" stroke="#ccc" /></I></Task>
          <Task $ml={4}><I w={16}><rect width="16" height="16" fill="#aaa" /><path d="M0 16l6-9v9z" fill="#f4e81c" /><path d="M4 4q3-4 7-2 4 2 4 7l-2 5-3-2V8L7 9 4 7z" fill="#555" stroke="#111" /><path d="M8 5h2" stroke="#fff" strokeWidth="2" /></I></Task>
          <Task $open $ml={4}><Headphones s={15} /></Task>
          <Task $ml={4}><I w={15} h={15}><rect width="15" height="15" rx="2" fill="#050505" /><path d="M4 7.500A3.500 3.500 0 1 1 7.500 11H3M5 7.800h5" stroke="#fff" strokeWidth="1.600" /></I></Task>
          <Task $ml={4}><I w={14} h={15}><path d="M7 2q5 3 6 12H1Q2 5 7 2z" fill="#46d146" /><path d="M7 0v3" stroke="#e06020" strokeWidth="2" /><circle cx="5" cy="8.500" r="1.600" fill="#111" /><circle cx="9.500" cy="8.500" r="1.600" fill="#111" /><path d="M5 12h5" stroke="#fff" /></I></Task>
          <Spacer />
          <I w={8} h={5}><path d="M4 0l4 5H0z" fill="#fff" stroke="#555" strokeWidth=".5" /></I>
          <IconSlot $ml={13}><I w={16} h={14}><path d="M0 4h3l4-4v14l-4-4H0z" fill="#fff" /><path d="M9 4.500q1.500 2.500 0 5M11 2.500q3 4.500 0 9M13 1q4 6 0 12" stroke="#fff" /></I></IconSlot>
          <IconSlot $ml={9}><I w={16} h={12}><path d="M1.500 12V9M5 12V8M8.500 12V5" stroke="#fff" strokeWidth="2.500" /><path d="M12 12V3M15 12V0" stroke="#aeb2b5" strokeWidth="2" /></I></IconSlot>
          <Label ml={20} w={43} color="#fff">7:20 AM</Label>
          <ShowDesktop />
        </BarItems>
      </Bar>
      <Orb>
        <svg width="24" height="22" viewBox="0 0 24 22">
          <path d="M2 4q5-3 9 0l-2 7q-4-3-9 0z" fill="#e8602c" /><path d="M12 4q5 3 10 0l-2 7q-5 3-10 0z" fill="#8cc63c" />
          <path d="M0 12q5-3 9 0l-2 7q-4-3-8 0z" fill="#3aa0e8" /><path d="M10 12q5 3 10 0l-2 7q-5 3-10 0z" fill="#fccc2c" />
        </svg>
      </Orb>
    </>
  );
}

export default function App() {
  return (
    <Desktop>
      <Global />
      <Chrome />
      <Audacity />
      <FamiTracker />
      <Taskbar />
    </Desktop>
  );
}
